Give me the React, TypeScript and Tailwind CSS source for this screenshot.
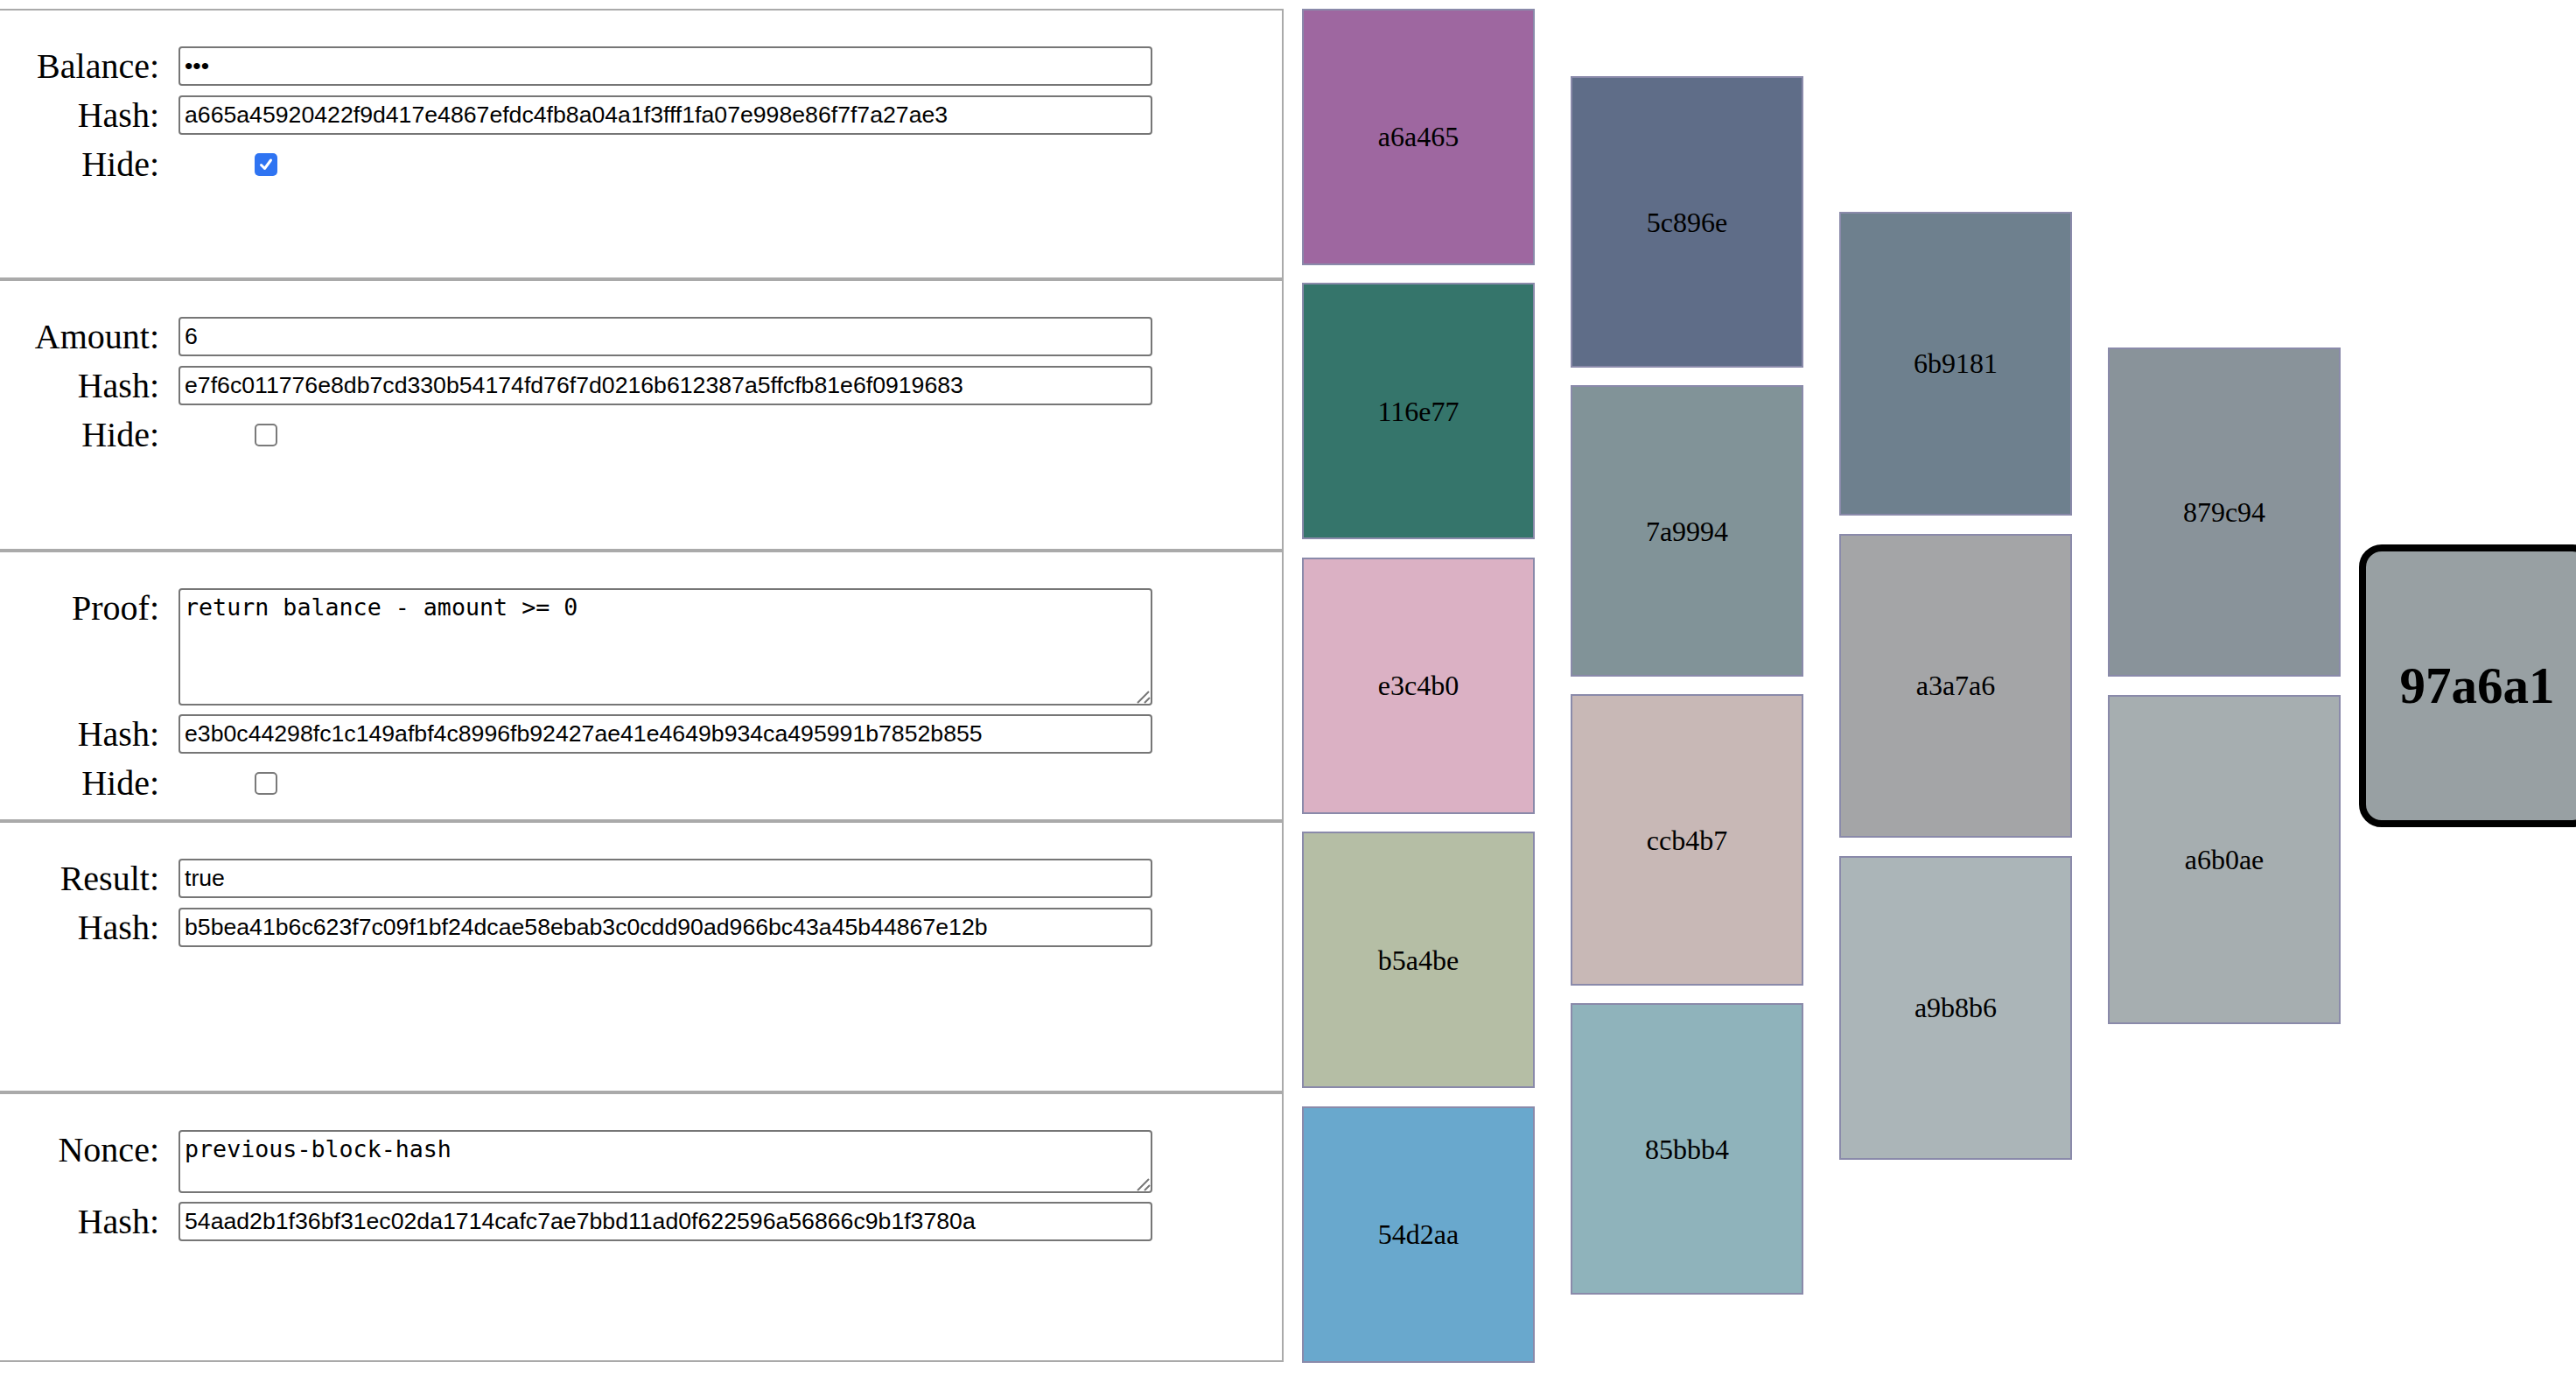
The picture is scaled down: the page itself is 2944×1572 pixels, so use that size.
type Field =
  | { label: string; kind: "text"; value: string }
  | { label: string; kind: "area"; value: string; h: string }
  | { label: string; kind: "check"; checked: boolean };

type Section = { h: string; fields: Field[] };

const sections: Section[] = [
  {
    h: "h-[309px]",
    fields: [
      { label: "Balance:", kind: "text", value: "•••" },
      { label: "Hash:", kind: "text", value: "a665a45920422f9d417e4867efdc4fb8a04a1f3fff1fa07e998e86f7f7a27ae3" },
      { label: "Hide:", kind: "check", checked: true },
    ],
  },
  {
    h: "h-[310px]",
    fields: [
      { label: "Amount:", kind: "text", value: "6" },
      { label: "Hash:", kind: "text", value: "e7f6c011776e8db7cd330b54174fd76f7d0216b612387a5ffcfb81e6f0919683" },
      { label: "Hide:", kind: "check", checked: false },
    ],
  },
  {
    h: "h-[309px]",
    fields: [
      { label: "Proof:", kind: "area", value: "return balance - amount >= 0", h: "h-[134px]" },
      { label: "Hash:", kind: "text", value: "e3b0c44298fc1c149afbf4c8996fb92427ae41e4649b934ca495991b7852b855" },
      { label: "Hide:", kind: "check", checked: false },
    ],
  },
  {
    h: "h-[310px]",
    fields: [
      { label: "Result:", kind: "text", value: "true" },
      { label: "Hash:", kind: "text", value: "b5bea41b6c623f7c09f1bf24dcae58ebab3c0cdd90ad966bc43a45b44867e12b" },
    ],
  },
  {
    h: "h-[308px]",
    fields: [
      { label: "Nonce:", kind: "area", value: "previous-block-hash", h: "h-[72px]" },
      { label: "Hash:", kind: "text", value: "54aad2b1f36bf31ec02da1714cafc7ae7bbd11ad0f622596a56866c9b1f3780a" },
    ],
  },
];

type Column = { gap: string; h: string; blocks: [string, string][] };

const columns: Column[] = [
  {
    gap: "gap-[20.5px]",
    h: "h-[293px]",
    blocks: [
      ["a6a465", "bg-[#9e67a0]"],
      ["116e77", "bg-[#35756b]"],
      ["e3c4b0", "bg-[#dbb1c4]"],
      ["b5a4be", "bg-[#b5bea5]"],
      ["54d2aa", "bg-[#69a8cd]"],
    ],
  },
  {
    gap: "gap-[20.5px]",
    h: "h-[332.5px]",
    blocks: [
      ["5c896e", "bg-[#5f6d88]"],
      ["7a9994", "bg-[#819398]"],
      ["ccb4b7", "bg-[#c8b8b6]"],
      ["85bbb4", "bg-[#8fb3bb]"],
    ],
  },
  {
    gap: "gap-[21px]",
    h: "h-[347px]",
    blocks: [
      ["6b9181", "bg-[#6e808e]"],
      ["a3a7a6", "bg-[#a4a5a7]"],
      ["a9b8b6", "bg-[#abb5b8]"],
    ],
  },
  {
    gap: "gap-[21px]",
    h: "h-[376px]",
    blocks: [
      ["879c94", "bg-[#89939a]"],
      ["a6b0ae", "bg-[#a6aeb0]"],
    ],
  },
];

const inputCls =
  "h-[45px] w-full rounded-[4px] border-2 border-[#767676] bg-white px-[5px] font-['Liberation_Sans',Arial,sans-serif] text-[26.67px] text-black outline-none";

function Check({ checked }: { checked: boolean }) {
  if (checked) {
    return (
      <div className="ml-[87px] mt-[10px] flex size-[26px] items-center justify-center rounded-[5px] bg-[#2f74f2]">
        <svg width="18" height="18" viewBox="0 0 18 18">
          <path d="M3.5 9.5 L7.5 13.5 L14.5 4" fill="none" stroke="white" strokeWidth="3" strokeLinecap="round" strokeLinejoin="round" />
        </svg>
      </div>
    );
  }
  return <div className="ml-[87px] mt-[10px] size-[26px] rounded-[5px] border-2 border-[#7a7a7a] bg-white" />;
}

function Area({ value, h }: { value: string; h: string }) {
  return (
    <div className="relative">
      <textarea
        readOnly
        value={value}
        className={`${h} block w-full resize-none rounded-[4px] border-2 border-[#767676] bg-white px-[5px] py-[4px] font-['DejaVu_Sans_Mono',monospace] text-[26.67px] leading-[31px] text-black outline-none`}
      />
      <svg className="pointer-events-none absolute bottom-0 right-0" width="20" height="20" viewBox="0 0 20 20">
        <path d="M3 17 L16 4 M11 17 L17 11" stroke="#777" strokeWidth="2" />
      </svg>
    </div>
  );
}

function FieldRow({ f }: { f: Field }) {
  return (
    <>
      <div className="text-right text-[40px] leading-[46px] text-black">{f.label}</div>
      {f.kind === "text" && <input type="text" readOnly value={f.value} className={inputCls} />}
      {f.kind === "area" && <Area value={f.value} h={f.h} />}
      {f.kind === "check" && <Check checked={f.checked} />}
    </>
  );
}

export default function App() {
  return (
    <div className="flex h-[1572px] w-[2944px] items-start overflow-hidden bg-white font-['Liberation_Serif','Times_New_Roman',serif]">
      <div className="-ml-[2px] mt-[10px] flex w-[1469px] shrink-0 flex-col">
        {sections.map((s, i) => (
          <div key={i} className={`${s.h} border-2 border-[#aaaaaa] pt-[41px]`}>
            <div className="grid grid-cols-[182px_1113px] items-start gap-x-[22px] gap-y-[10px]">
              {s.fields.map((f, j) => (
                <FieldRow key={j} f={f} />
              ))}
            </div>
          </div>
        ))}
      </div>

      <div className="ml-[21px] mt-[10px] flex h-[1546px] shrink-0 items-center gap-[41px]">
        {columns.map((c, i) => (
          <div key={i} className={`flex w-[266px] flex-col ${c.gap}`}>
            {c.blocks.map(([label, bg]) => (
              <div
                key={label}
                className={`${c.h} ${bg} flex items-center justify-center border-2 border-[#8a8aaa] text-[32px] text-black`}
              >
                {label}
              </div>
            ))}
          </div>
        ))}
        <div className="-ml-[20px] flex h-[323px] w-[270px] shrink-0 items-center justify-center rounded-[26px] border-[8px] border-black bg-[#98a0a3] text-[59px] font-bold text-black">
          97a6a1
        </div>
      </div>
    </div>
  );
}
